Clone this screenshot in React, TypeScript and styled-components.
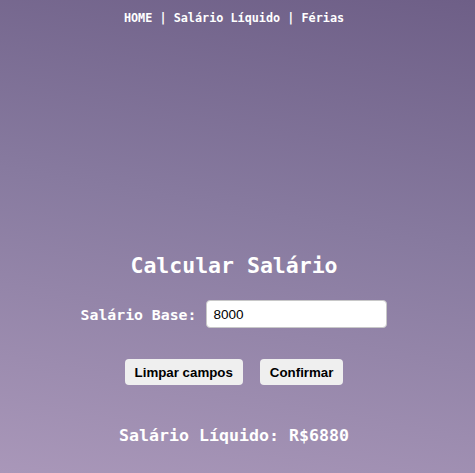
import styled, { createGlobalStyle } from "styled-components"

const Global = createGlobalStyle`
  html, body {
    margin: 0;
    padding: 0;
  }
  body {
    min-height: 100vh;
    background: linear-gradient(190deg, #6e5f87 0%, #877a9f 45%, #a997b9 100%);
    font-family: "DejaVu Sans Mono", "Liberation Mono", monospace;
    color: #fff;
  }
`

const Page = styled.div`
  display: flex;
  flex-direction: column;
  align-items: center;
  min-height: 473px;
  padding-right: 7px;
`

const Nav = styled.nav`
  padding-top: 11px;
  font-size: 11.8px;
  font-weight: bold;
  white-space: pre;
  a {
    color: #fff;
    text-decoration: none;
  }
`

const Main = styled.main`
  display: flex;
  flex-direction: column;
  align-items: center;
  margin-top: 228px;
`

const Title = styled.h2`
  margin: 0;
  font-size: 21.5px;
  font-weight: bold;
`

const Field = styled.label`
  display: flex;
  align-items: center;
  gap: 10px;
  margin-top: 22px;
  font-size: 14.8px;
  font-weight: bold;
`

const Input = styled.input`
  width: 181px;
  height: 28px;
  box-sizing: border-box;
  border: 1px solid #c8c8c8;
  border-radius: 4px;
  padding: 0 6px;
  font-family: "Liberation Sans", Arial, sans-serif;
  font-size: 13.5px;
  color: #000;
  background: #fff;
`

const Buttons = styled.div`
  display: flex;
  gap: 17px;
  margin-top: 31px;
`

const Button = styled.button`
  height: 26px;
  padding: 0 10px;
  border: none;
  border-radius: 4px;
  background: #efefef;
  font-family: "Liberation Sans", Arial, sans-serif;
  font-size: 13.3px;
  font-weight: bold;
  color: #000;
`

const Result = styled.h3`
  margin: 41px 0 0;
  font-size: 16.6px;
  font-weight: bold;
`

export default function App() {
  return (
    <>
      <Global />
      <Page>
        <Nav>
          <a href="#">HOME</a> | <a href="#">Salário Líquido</a> | <a href="#">Férias</a>
        </Nav>
        <Main>
          <Title>Calcular Salário</Title>
          <Field>
            Salário Base:
            <Input defaultValue="8000" />
          </Field>
          <Buttons>
            <Button>Limpar campos</Button>
            <Button>Confirmar</Button>
          </Buttons>
          <Result>Salário Líquido: R$6880</Result>
        </Main>
      </Page>
    </>
  )
}
